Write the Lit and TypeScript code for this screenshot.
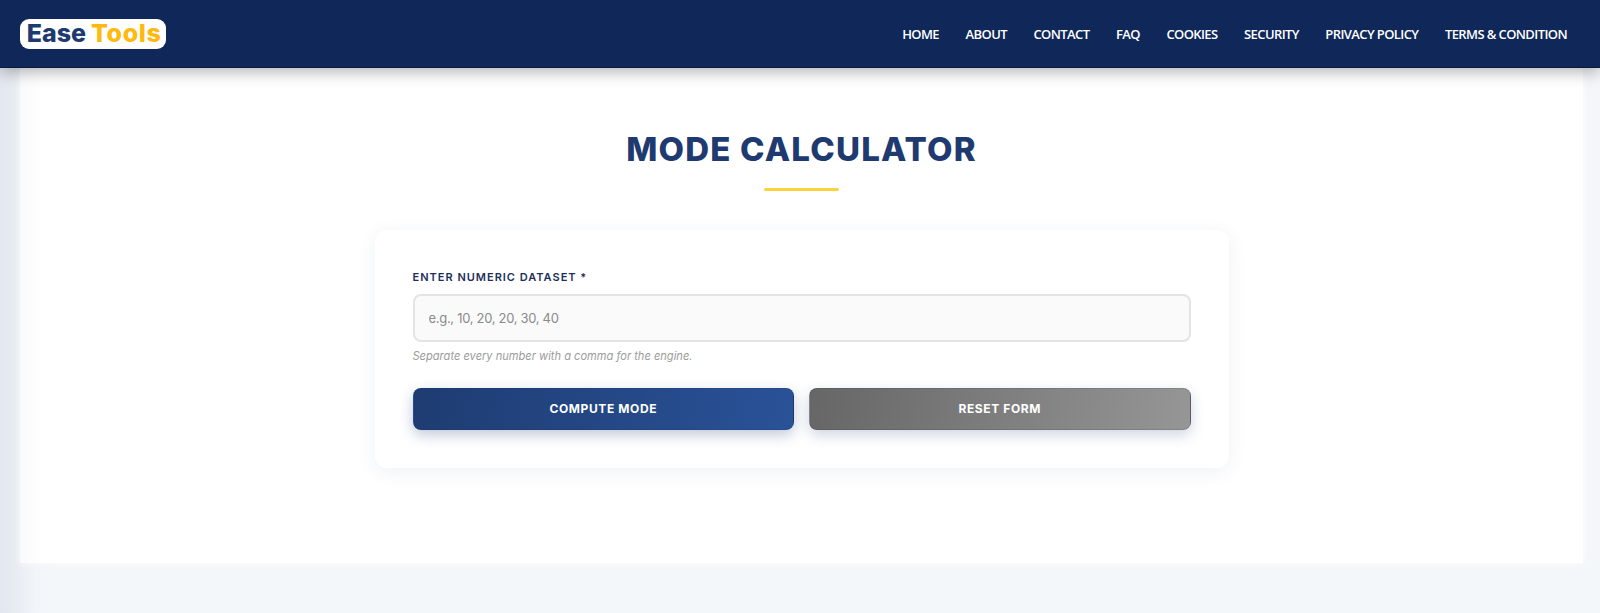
import { LitElement, html, css } from "lit";
import { customElement } from "lit/decorators.js";

const NAV = ["HOME", "ABOUT", "CONTACT", "FAQ", "COOKIES", "SECURITY", "PRIVACY POLICY", "TERMS & CONDITION"];

@customElement("app-root")
export class AppRoot extends LitElement {
  static styles = css`
    :host {
      display: block;
      height: 613px;
      overflow: hidden;
      font-family: Inter, "Liberation Sans", sans-serif;
      background: linear-gradient(90deg, #e2e7f0 0, #e9edf3 18px, #f2f5f9 36px, #f4f7fa 60px);
    }
    * { box-sizing: border-box; }
    .top {
      position: relative;
      z-index: 2;
      height: 68px;
      display: flex;
      align-items: center;
      justify-content: space-between;
      padding: 0 33px 0 20px;
      background: #0f2759;
      border-bottom: 1px solid #081a40;
      box-shadow: 0 4px 15px rgba(0, 0, 0, 0.3);
    }
    .logo {
      width: 146px;
      height: 30px;
      display: flex;
      align-items: center;
      justify-content: center;
      gap: 5px;
      padding-left: 2px;
      background: #fff;
      border-radius: 9px;
      font-size: 25px;
      font-weight: 800;
      letter-spacing: 0;
      line-height: 1;
    }
    .ease { color: #1e3a70; }
    .tools { color: #ffb90f; letter-spacing: 0.6px; }
    nav { display: flex; gap: 26.5px; }
    nav a {
      color: #fff;
      font-family: "Open Sans", sans-serif;
      font-size: 13px;
      font-weight: 600;
      letter-spacing: -0.6px;
      text-decoration: none;
      white-space: nowrap;
    }
    main {
      height: 495px;
      margin: 0 17px 0 20px;
      padding-top: 65px;
      background: linear-gradient(90deg, #f9fafc 0, #fff 22px);
      box-shadow: 0 0 8px rgba(255, 255, 255, 0.7);
      display: flex;
      flex-direction: column;
      align-items: center;
    }
    h1 {
      margin: 0;
      height: 32px;
      color: #1e3a70;
      font-size: 33px;
      font-weight: 800;
      line-height: 32px;
      letter-spacing: 1.2px;
    }
    .rule {
      width: 75px;
      height: 3px;
      margin-top: 23px;
      border-radius: 2px;
      background: #ffd43b;
    }
    .card {
      width: 854px;
      height: 238px;
      margin-top: 39px;
      padding: 40px 38px 0;
      background: #fff;
      border-radius: 12px;
      box-shadow: 0 4px 20px rgba(30, 58, 112, 0.07);
    }
    label {
      display: block;
      height: 14px;
      color: #1e2f5c;
      font-size: 11px;
      font-weight: 600;
      line-height: 14px;
      letter-spacing: 1px;
    }
    input {
      display: block;
      width: 100%;
      height: 48px;
      margin-top: 10px;
      padding: 0 14px;
      background: #fafafa;
      border: 2px solid #e4e4e6;
      border-radius: 8px;
      outline: none;
      font-family: inherit;
      font-size: 13px;
      letter-spacing: -0.3px;
      color: #333;
    }
    input::placeholder { color: #8a8a8a; opacity: 1; }
    .hint {
      margin-top: 7px;
      height: 14px;
      color: #9c9c9c;
      font-size: 11.1px;
      font-style: italic;
      line-height: 14px;
    }
    .actions {
      display: grid;
      grid-template-columns: 1fr 1fr;
      gap: 15px;
      margin-top: 25px;
    }
    button {
      height: 42px;
      padding: 0 0 2px;
      border: 1px solid rgba(20, 35, 80, 0.14);
      border-radius: 8px;
      color: #fff;
      font-family: inherit;
      font-size: 12px;
      font-weight: 700;
      letter-spacing: 0.6px;
    }
    .primary {
      background: linear-gradient(100deg, #1e3c72, #2a5298);
      box-shadow: 0 5px 14px rgba(30, 60, 114, 0.28);
    }
    .secondary {
      background: linear-gradient(100deg, #666, #969696);
      box-shadow: 0 5px 14px rgba(30, 60, 114, 0.22);
    }
  `;

  render() {
    return html`
      <header class="top">
        <div class="logo"><span class="ease">Ease</span><span class="tools">Tools</span></div>
        <nav>${NAV.map((n) => html`<a href="#">${n}</a>`)}</nav>
      </header>
      <main>
        <h1>MODE CALCULATOR</h1>
        <div class="rule"></div>
        <section class="card">
          <label>ENTER NUMERIC DATASET *</label>
          <input placeholder="e.g., 10, 20, 20, 30, 40" />
          <div class="hint">Separate every number with a comma for the engine.</div>
          <div class="actions">
            <button class="primary">COMPUTE MODE</button>
            <button class="secondary">RESET FORM</button>
          </div>
        </section>
      </main>
    `;
  }
}
